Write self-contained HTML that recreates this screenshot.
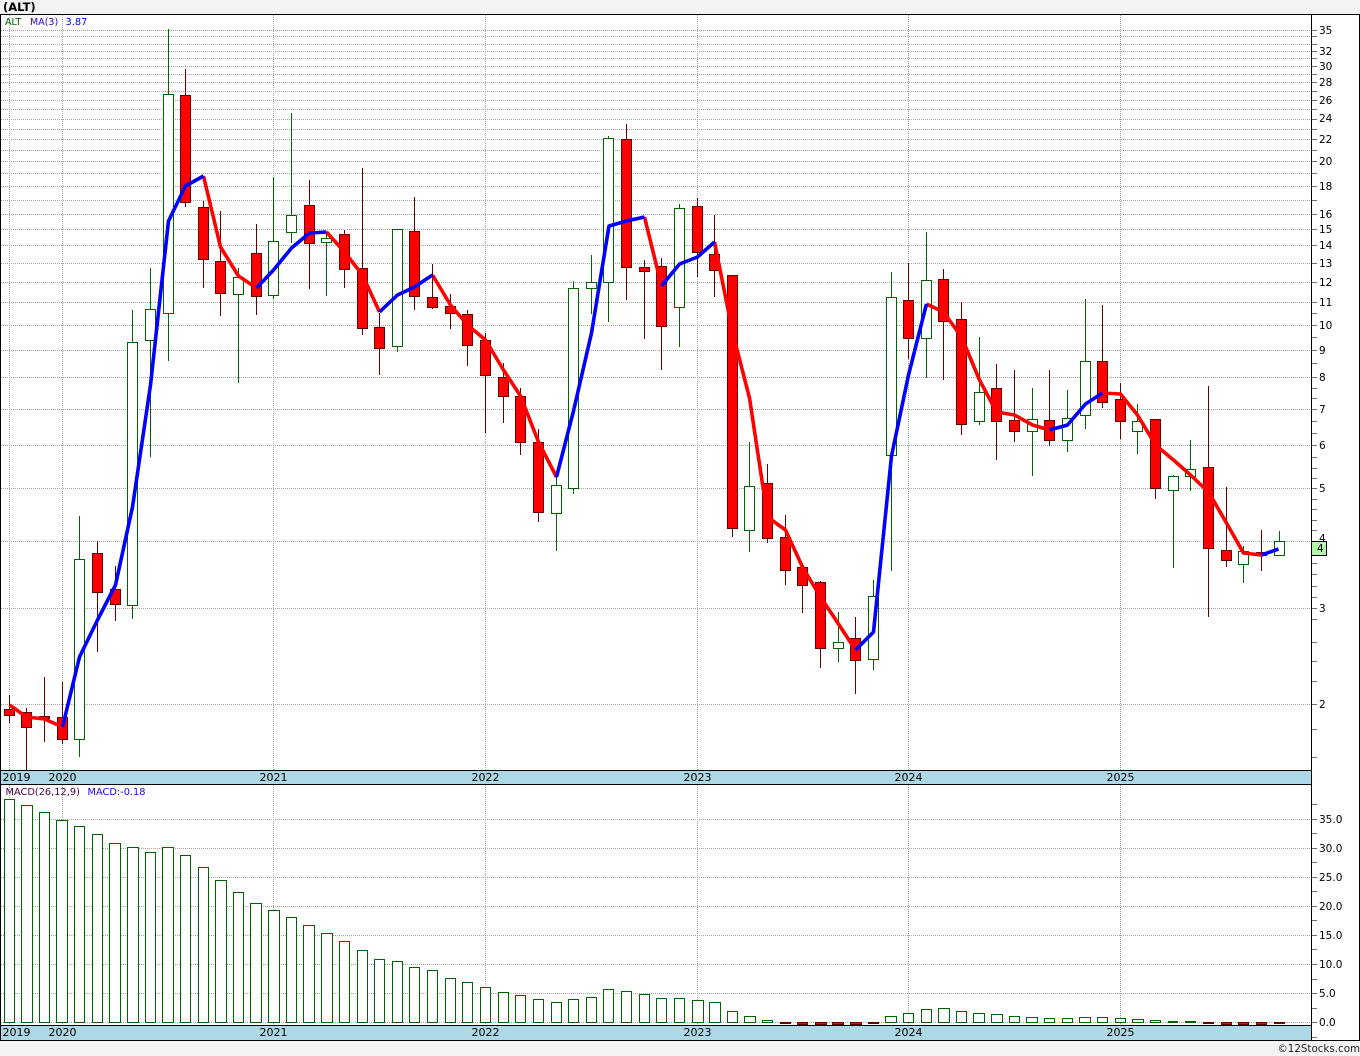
<!DOCTYPE html>
<html><head><meta charset="utf-8"><title>(ALT)</title>
<style>
html,body{margin:0;padding:0;background:#f3f3f3}
svg{display:block}
text{font-family:"DejaVu Sans","Liberation Sans",sans-serif;font-size:10.5px;fill:#000}
</style></head><body>
<svg width="1360" height="1056" viewBox="0 0 1360 1056" xmlns="http://www.w3.org/2000/svg">
<rect width="1360" height="1056" fill="#f3f3f3"/>
<rect x="0" y="14" width="1360" height="1027" fill="#fff"/>
<rect x="1" y="771" width="1311" height="13" fill="#add8e6"/>
<rect x="1" y="1026" width="1311" height="14" fill="#add8e6"/>

<!-- grid -->
<g fill="none" stroke="#a6a6a6" stroke-width="1" stroke-dasharray="1 1" shape-rendering="crispEdges">
<path d="M1 30.5H1311M1 36.5H1311M1 44.5H1311M1 51.5H1311M1 58.5H1311M1 66.5H1311M1 74.5H1311M1 82.5H1311M1 91.5H1311M1 100.5H1311M1 109.5H1311M1 119.5H1311M1 129.5H1311M1 139.5H1311M1 150.5H1311M1 161.5H1311M1 173.5H1311M1 186.5H1311M1 200.5H1311M1 214.5H1311M1 229.5H1311M1 245.5H1311M1 263.5H1311M1 282.5H1311M1 302.5H1311M1 325.5H1311M1 350.5H1311M1 377.5H1311M1 409.5H1311M1 445.5H1311M1 488.5H1311M1 541.5H1311M1 608.5H1311M1 704.5H1311"/>
<path d="M1 819.5H1311M1 848.5H1311M1 877.5H1311M1 906.5H1311M1 935.5H1311M1 964.5H1311M1 993.5H1311M1 1022.5H1311"/>
<path d="M9.5 15V770M62.5 15V770M273.5 15V770M485.5 15V770M697.5 15V770M908.5 15V770M1120.5 15V770"/>
<path d="M9.5 785V1025M62.5 785V1025M273.5 785V1025M485.5 785V1025M697.5 785V1025M908.5 785V1025M1120.5 785V1025"/>
</g>

<!-- axis ticks -->
<g fill="none" stroke="#707070" stroke-width="1" shape-rendering="crispEdges">
<path d="M1312 30.5h5M1312 36.5h5M1312 44.5h5M1312 51.5h5M1312 58.5h5M1312 66.5h5M1312 74.5h5M1312 82.5h5M1312 91.5h5M1312 100.5h5M1312 109.5h5M1312 119.5h5M1312 129.5h5M1312 139.5h5M1312 150.5h5M1312 161.5h5M1312 173.5h5M1312 186.5h5M1312 200.5h5M1312 214.5h5M1312 229.5h5M1312 245.5h5M1312 263.5h5M1312 282.5h5M1312 302.5h5M1312 313.5h5M1312 325.5h5M1312 337.5h5M1312 350.5h5M1312 363.5h5M1312 377.5h5M1312 388.5h5M1312 398.5h5M1312 409.5h5M1312 421.5h5M1312 433.5h5M1312 445.5h5M1312 457.5h5M1312 468.5h5M1312 478.5h5M1312 488.5h5M1312 499.5h5M1312 509.5h5M1312 520.5h5M1312 530.5h5M1312 541.5h5M1312 563.5h5M1312 574.5h5M1312 586.5h5M1312 597.5h5M1312 608.5h5M1312 619.5h5M1312 642.5h5M1312 661.5h5M1312 681.5h5M1312 704.5h5M1312 729.5h5M1312 757.5h5"/>
<path d="M1312 804.5h5M1312 819.5h5M1312 833.5h5M1312 848.5h5M1312 862.5h5M1312 877.5h5M1312 891.5h5M1312 906.5h5M1312 920.5h5M1312 935.5h5M1312 949.5h5M1312 964.5h5M1312 979.5h5M1312 993.5h5M1312 1008.5h5M1312 1022.5h5M1312 1037.5h5"/>
</g>

<!-- candle wicks -->
<g fill="none" stroke-width="1" shape-rendering="crispEdges">
<path stroke="#006400" d="M79.5 516V757M132.5 310V619M150.5 268V457M168.5 29V361M238.5 268V383M273.5 177V299M291.5 113V243M326.5 232V296M397.5 229V352M556.5 477V551M573.5 281V494M591.5 255V314M608.5 136V322M679.5 204V347M749.5 442V552M838.5 612V662M873.5 580V670M891.5 272V571M926.5 232V378M979.5 337V425M1032.5 388V476M1067.5 390V452M1085.5 299V429M1137.5 404V454M1173.5 475V568M1190.5 440V491M1243.5 546V583M1279.5 531V556"/>
<path stroke="#660000" d="M9.5 695V723M26.5 708V770M44.5 677V742M62.5 682V744M97.5 541V652M115.5 566V621M185.5 69V207M203.5 201V288M220.5 211V316M256.5 224V315M309.5 180V289M344.5 230V288M362.5 168V335M379.5 313V375M414.5 197V310M432.5 264V309M450.5 294V329M467.5 310V366M485.5 333V433M503.5 363V423M520.5 388V455M538.5 429V522M626.5 124V300M644.5 260V339M661.5 258V370M697.5 198V277M714.5 215V297M732.5 275V537M767.5 464V543M785.5 515V585M802.5 567V613M820.5 581V668M855.5 617V694M908.5 263V359M943.5 269V380M961.5 302V435M996.5 364V460M1014.5 370V442M1049.5 370V446M1102.5 305V408M1120.5 383V439M1155.5 419V499M1208.5 386V617M1226.5 487V567M1261.5 530V571"/>
</g>

<!-- candle bodies -->
<g stroke-width="1" shape-rendering="crispEdges">
<path fill="#fff" stroke="#006400" d="M74.5 559.5h10V739.5h-10zM127.5 342.5h10V605.5h-10zM145.5 309.5h10V340.5h-10zM163.5 94.5h10V313.5h-10zM233.5 277.5h10V294.5h-10zM268.5 241.5h10V295.5h-10zM286.5 215.5h10V232.5h-10zM321.5 238.5h10V242.5h-10zM392.5 229.5h10V346.5h-10zM551.5 485.5h10V513.5h-10zM568.5 288.5h10V488.5h-10zM586.5 282.5h10V288.5h-10zM603.5 138.5h10V282.5h-10zM674.5 208.5h10V307.5h-10zM744.5 486.5h10V530.5h-10zM833.5 642.5h10V648.5h-10zM868.5 596.5h10V659.5h-10zM886.5 297.5h10V455.5h-10zM921.5 280.5h10V338.5h-10zM974.5 392.5h10V421.5h-10zM1027.5 419.5h10V431.5h-10zM1062.5 418.5h10V440.5h-10zM1080.5 361.5h10V415.5h-10zM1132.5 421.5h10V431.5h-10zM1168.5 476.5h10V490.5h-10zM1185.5 469.5h10V476.5h-10zM1238.5 551.5h10V564.5h-10zM1274.5 541.5h10V555.5h-10z"/>
<path fill="#f00" stroke="#660000" d="M4.5 709.5h10V715.5h-10zM21.5 712.5h10V727.5h-10zM39.5 716.5h10V718.5h-10zM57.5 717.5h10V739.5h-10zM92.5 553.5h10V592.5h-10zM110.5 589.5h10V604.5h-10zM180.5 95.5h10V202.5h-10zM198.5 207.5h10V259.5h-10zM215.5 261.5h10V293.5h-10zM251.5 253.5h10V296.5h-10zM304.5 205.5h10V243.5h-10zM339.5 234.5h10V269.5h-10zM357.5 268.5h10V328.5h-10zM374.5 327.5h10V348.5h-10zM409.5 231.5h10V296.5h-10zM427.5 297.5h10V307.5h-10zM445.5 306.5h10V313.5h-10zM462.5 314.5h10V345.5h-10zM480.5 340.5h10V375.5h-10zM498.5 377.5h10V396.5h-10zM515.5 396.5h10V442.5h-10zM533.5 442.5h10V512.5h-10zM621.5 139.5h10V267.5h-10zM639.5 267.5h10V271.5h-10zM656.5 266.5h10V326.5h-10zM692.5 206.5h10V252.5h-10zM709.5 254.5h10V270.5h-10zM727.5 275.5h10V528.5h-10zM762.5 483.5h10V538.5h-10zM780.5 537.5h10V570.5h-10zM797.5 567.5h10V585.5h-10zM815.5 582.5h10V648.5h-10zM850.5 638.5h10V660.5h-10zM903.5 300.5h10V338.5h-10zM938.5 279.5h10V321.5h-10zM956.5 319.5h10V424.5h-10zM991.5 388.5h10V421.5h-10zM1009.5 420.5h10V431.5h-10zM1044.5 420.5h10V440.5h-10zM1097.5 361.5h10V402.5h-10zM1115.5 399.5h10V421.5h-10zM1150.5 419.5h10V488.5h-10zM1203.5 467.5h10V548.5h-10zM1221.5 550.5h10V560.5h-10zM1256.5 552.5h10V555.5h-10z"/>
</g>

<!-- MA(3) line -->
<g fill="none" stroke-width="3.6" stroke-linejoin="round" stroke-linecap="butt">
<polyline stroke="#f00" points="9.5,705 26.5,717 44.5,719 62.5,727"/>
<polyline stroke="#f00" points="203.5,176 220.5,247 238.5,276 256.5,288"/>
<polyline stroke="#f00" points="326.5,232 344.5,252 362.5,275 379.5,312"/>
<polyline stroke="#f00" points="432.5,275 450.5,305 467.5,325 485.5,340 503.5,370 520.5,396 538.5,442 556.5,477"/>
<polyline stroke="#f00" points="644.5,217 661.5,286"/>
<polyline stroke="#f00" points="714.5,242 732.5,332 749.5,398 767.5,517 785.5,530 802.5,567 820.5,597 838.5,624 855.5,650"/>
<polyline stroke="#f00" points="926.5,304 943.5,312 961.5,337 979.5,380 996.5,412 1014.5,415 1032.5,425 1049.5,430"/>
<polyline stroke="#f00" points="1102.5,393 1120.5,394 1137.5,415 1155.5,445 1173.5,460 1190.5,475 1208.5,492 1226.5,523 1243.5,553 1261.5,555"/>
<polyline stroke="#00f" points="62.5,727 79.5,657 97.5,620 115.5,585 132.5,507 150.5,385 168.5,221 185.5,186 203.5,176"/>
<polyline stroke="#00f" points="256.5,288 273.5,270 291.5,248 309.5,233 326.5,232"/>
<polyline stroke="#00f" points="379.5,312 397.5,295 414.5,287 432.5,275"/>
<polyline stroke="#00f" points="556.5,477 573.5,411 591.5,333 609,226 626.5,221 644.5,217"/>
<polyline stroke="#00f" points="661.5,286 679.5,264 697.5,257 714.5,242"/>
<polyline stroke="#00f" points="855.5,650 873.5,632 891.5,456 908.5,375 926.5,304"/>
<polyline stroke="#00f" points="1049.5,430 1067.5,425 1085.5,404 1102.5,393"/>
<polyline stroke="#00f" points="1261.5,555 1278.5,549"/>
</g>

<!-- MACD bars -->
<g stroke-width="1" shape-rendering="crispEdges">
<path fill="#fff" stroke="#006400" d="M4.5 799.5h10V1022.5h-10zM21.5 805.5h11V1022.5h-11zM39.5 812.5h10V1022.5h-10zM56.5 820.5h11V1022.5h-11zM74.5 826.5h10V1022.5h-10zM92.5 834.5h10V1022.5h-10zM109.5 843.5h11V1022.5h-11zM127.5 847.5h11V1022.5h-11zM145.5 852.5h10V1022.5h-10zM162.5 847.5h11V1022.5h-11zM180.5 855.5h10V1022.5h-10zM198.5 867.5h10V1022.5h-10zM215.5 880.5h11V1022.5h-11zM233.5 892.5h10V1022.5h-10zM250.5 903.5h11V1022.5h-11zM268.5 910.5h11V1022.5h-11zM286.5 917.5h10V1022.5h-10zM303.5 925.5h11V1022.5h-11zM321.5 933.5h11V1022.5h-11zM339.5 941.5h10V1022.5h-10zM357.5 950.5h10V1022.5h-10zM374.5 959.5h10V1022.5h-10zM392.5 961.5h10V1022.5h-10zM409.5 967.5h10V1022.5h-10zM427.5 970.5h10V1022.5h-10zM445.5 978.5h10V1022.5h-10zM462.5 982.5h10V1022.5h-10zM480.5 987.5h10V1022.5h-10zM498.5 992.5h10V1022.5h-10zM515.5 995.5h10V1022.5h-10zM533.5 999.5h10V1022.5h-10zM551.5 1002.5h10V1022.5h-10zM568.5 999.5h10V1022.5h-10zM586.5 997.5h10V1022.5h-10zM603.5 989.5h10V1022.5h-10zM621.5 991.5h10V1022.5h-10zM639.5 994.5h10V1022.5h-10zM656.5 998.5h10V1022.5h-10zM674.5 998.5h10V1022.5h-10zM692.5 1000.5h11V1022.5h-11zM709.5 1002.5h11V1022.5h-11zM727.5 1011.5h10V1022.5h-10zM744.5 1016.5h11V1022.5h-11zM762.5 1020.5h10V1022.5h-10zM885.5 1016.5h11V1022.5h-11zM903.5 1013.5h10V1022.5h-10zM921.5 1009.5h10V1022.5h-10zM938.5 1008.5h11V1022.5h-11zM956.5 1011.5h10V1022.5h-10zM973.5 1013.5h11V1022.5h-11zM991.5 1014.5h11V1022.5h-11zM1009.5 1016.5h10V1022.5h-10zM1026.5 1017.5h11V1022.5h-11zM1044.5 1018.5h10V1022.5h-10zM1062.5 1018.5h10V1022.5h-10zM1079.5 1017.5h11V1022.5h-11zM1097.5 1017.5h10V1022.5h-10zM1115.5 1018.5h10V1022.5h-10zM1132.5 1019.5h11V1022.5h-11zM1150.5 1020.5h10V1022.5h-10z"/>
<path fill="none" stroke="#006400" stroke-width="2" d="M1168 1022h10M1185 1022h11"/>
<path fill="#f00" stroke="#660000" d="M797.5 1022.5h10V1024.5h-10zM815.5 1022.5h11V1024.5h-11zM832.5 1022.5h11V1024.5h-11zM850.5 1022.5h11V1024.5h-11zM1221.5 1022.5h10V1024.5h-10zM1238.5 1022.5h10V1024.5h-10zM1256.5 1022.5h10V1024.5h-10z"/>
<path fill="none" stroke="#660000" stroke-width="2" d="M780 1023h11M868 1023h11M1203 1023h11M1274 1023h11"/>
</g>

<!-- frame -->
<g fill="none" stroke="#000" stroke-width="1" shape-rendering="crispEdges">
<path d="M0 14.5H1360M0 770.5H1312M0 784.5H1312M0 1025.5H1312M0 1040.5H1360"/>
<path d="M0.5 14V1041M1311.5 14V1041M1359.5 14V1041"/>
</g>

<!-- price labels -->
<text x="1319" y="34">35</text><text x="1319" y="55">32</text><text x="1319" y="70">30</text><text x="1319" y="86">28</text><text x="1319" y="104">26</text><text x="1319" y="122">24</text><text x="1319" y="143">22</text><text x="1319" y="165">20</text><text x="1319" y="190">18</text><text x="1319" y="218">16</text><text x="1319" y="233">15</text><text x="1319" y="249">14</text><text x="1319" y="267">13</text><text x="1319" y="286">12</text><text x="1319" y="306">11</text><text x="1319" y="329">10</text><text x="1319" y="354">9</text><text x="1319" y="381">8</text><text x="1319" y="413">7</text><text x="1319" y="449">6</text><text x="1319" y="492">5</text><text x="1319" y="542">4</text><text x="1319" y="612">3</text><text x="1319" y="708">2</text>
<rect x="1311.5" y="541.5" width="15" height="14" fill="#b4f7ac" stroke="#000" stroke-width="1" shape-rendering="crispEdges"/>
<text x="1317" y="552">4</text>

<!-- MACD labels -->
<text x="1319" y="823">35.0</text><text x="1319" y="852">30.0</text><text x="1319" y="881">25.0</text><text x="1319" y="910">20.0</text><text x="1319" y="939">15.0</text><text x="1319" y="968">10.0</text><text x="1319" y="997">5.0</text><text x="1319" y="1026">0.0</text>

<!-- year labels -->
<g>
<text x="2.5" y="781" style="font-size:11px">2019</text><text x="48.5" y="781" style="font-size:11px">2020</text><text x="259.5" y="781" style="font-size:11px">2021</text><text x="471.5" y="781" style="font-size:11px">2022</text><text x="683.5" y="781" style="font-size:11px">2023</text><text x="894.5" y="781" style="font-size:11px">2024</text><text x="1106.5" y="781" style="font-size:11px">2025</text>
<text x="2.5" y="1036" style="font-size:11px">2019</text><text x="48.5" y="1036" style="font-size:11px">2020</text><text x="259.5" y="1036" style="font-size:11px">2021</text><text x="471.5" y="1036" style="font-size:11px">2022</text><text x="683.5" y="1036" style="font-size:11px">2023</text><text x="894.5" y="1036" style="font-size:11px">2024</text><text x="1106.5" y="1036" style="font-size:11px">2025</text>
</g>

<!-- legends -->
<text x="3" y="11" style="font-size:11.5px;font-weight:bold;fill:#000">(ALT)</text>
<text x="5" y="25" style="font-size:9.5px;fill:#006400">ALT</text>
<text x="30" y="25" style="font-size:9.5px;fill:#2a00dd">MA(3)</text>
<text x="65.5" y="25" style="font-size:9.8px;fill:#0000ff">3.87</text>
<text x="5.5" y="795" style="font-size:9.8px;fill:#500030">MACD(26,12,9)</text>
<text x="87.5" y="795" style="font-size:9.8px;fill:#2a00ee">MACD:-0.18</text>
<text x="1277.5" y="1052" style="font-size:10.3px;fill:#222">©12Stocks.com</text>
</svg>
</body></html>
